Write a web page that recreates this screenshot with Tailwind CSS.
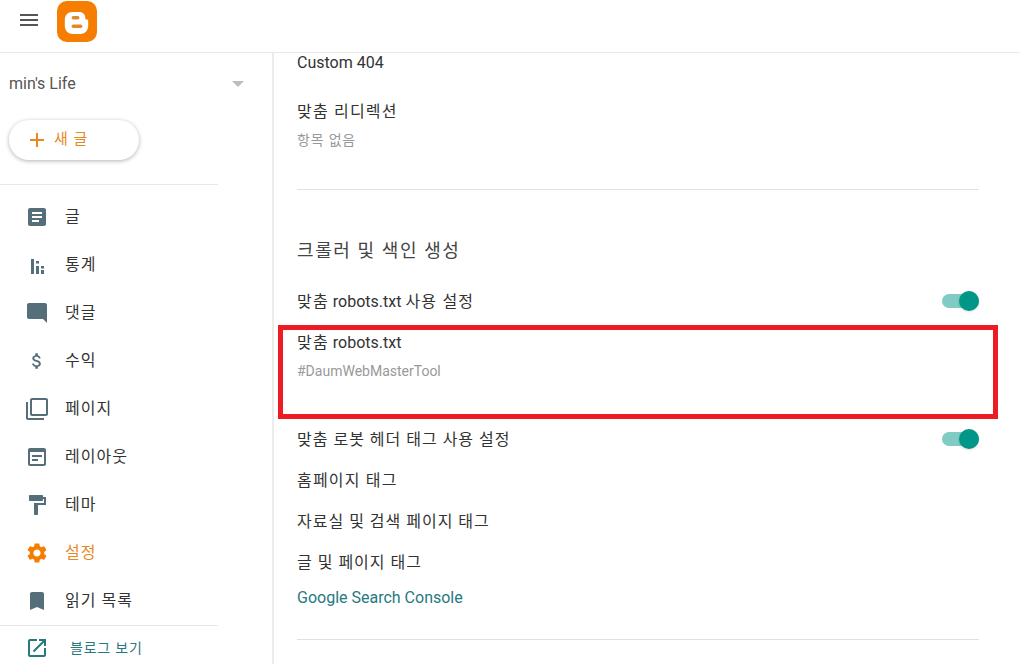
<!DOCTYPE html>
<html lang="ko">
<head>
  <meta charset="UTF-8">
  <title>설정</title>
  <script src="https://cdn.jsdelivr.net/npm/@tailwindcss/browser@4"></script>
</head>
<body class="relative h-[664px] overflow-hidden bg-white font-['Roboto','Noto_Sans_CJK_KR',sans-serif] text-[#212121]">

<!-- top bar -->
<header class="h-[53px] flex items-center border-b border-[#e8e8e8]">
  <svg class="ml-[17px] w-6 h-6 mb-[12px] fill-[#555]" viewBox="0 0 24 24"><path d="M3 18h18v-2H3v2zm0-5h18v-2H3v2zm0-7v2h18V6H3z"/></svg>
  <svg class="ml-[16px] mb-[10px] w-[40px] h-[41px]" viewBox="0 0 41 41" preserveAspectRatio="none">
    <rect x="0" y="0" width="41" height="41" rx="10" fill="#f57d00"/>
    <path d="M16 11h7c3.500 0 6 2.500 6 6 0 1 .5 1.500 1.500 1.500 1 0 1.500.5 1.500 1.500v5c0 4-3 8-8 8H16c-4 0-8-3-8-8V19c0-5 3-8 8-8z" fill="#fff"/>
    <rect x="15" y="15" width="8" height="3.500" rx="1.700" fill="#e08a2e"/>
    <rect x="15" y="23.500" width="11" height="3.500" rx="1.700" fill="#e08a2e"/>
  </svg>
</header>

<div class="flex h-[611px]">
  <!-- sidebar -->
  <aside class="w-[274px] shrink-0 border-r-2 border-[#ececec] flex flex-col">
    <div class="shrink-0 h-[60px] pt-[21px] pl-[9px] pr-[28px] flex items-start justify-between text-[16px] leading-[20px] text-[#555]">
      <span>min's Life</span>
      <span class="mt-[7px] w-0 h-0 border-x-[6px] border-x-transparent border-t-[6px] border-t-[#bdbdbd]"></span>
    </div>
    <div class="shrink-0 h-[71px] pt-[7px] pl-[9px]">
      <button class="w-[130px] h-[40px] rounded-full bg-white shadow-[0_1px_4px_rgba(0,0,0,0.3)] flex items-center pl-[20px] text-[#e8891f] text-[15px]">
        <svg class="w-4 h-4 fill-[#e8891f]" viewBox="0 0 16 16"><path d="M7 1h2v6h6v2H9v6H7V9H1V7h6z"/></svg>
        <span class="ml-[9px] mb-[2px] tracking-[1px]">새 글</span>
      </button>
    </div>
    <nav class="shrink-0 w-[218px] h-[442px] border-y border-[#e8e8e8] flex flex-col pt-[8px]">
      <a class="h-[48px] flex items-center pl-[25px] gap-[16px] text-[16px] tracking-[1px] text-[#333]">
        <svg class="w-6 h-6 fill-[#546e7a]" viewBox="0 0 24 24"><path d="M19 3H5c-1.100 0-2 .9-2 2v14c0 1.100.9 2 2 2h14c1.100 0 2-.9 2-2V5c0-1.100-.9-2-2-2zm-5 14H7v-2h7v2zm3-4H7v-2h10v2zm0-4H7V7h10v2z"/></svg>
        <span>글</span>
      </a>
      <a class="h-[48px] flex items-center pl-[25px] gap-[16px] text-[16px] tracking-[1px] text-[#333]">
        <svg class="w-6 h-6 fill-[#546e7a]" viewBox="0 0 24 24"><path d="M6 6h3v15H6zM11 13h3v8h-3zM11 8h3v2.500h-3zM16 17h3v4h-3zM16 13h3v2.500h-3z"/></svg>
        <span>통계</span>
      </a>
      <a class="h-[48px] flex items-center pl-[25px] gap-[16px] text-[16px] tracking-[1px] text-[#333]">
        <svg class="w-6 h-6 fill-[#546e7a]" viewBox="0 0 24 24"><path d="M22 4c0-1.100-.9-2-2-2H4c-1.100 0-2 .9-2 2v12c0 1.100.9 2 2 2h14l4 4V4z"/></svg>
        <span>댓글</span>
      </a>
      <a class="h-[48px] flex items-center pl-[25px] gap-[16px] text-[16px] tracking-[1px] text-[#333]">
        <svg class="w-6 h-6 fill-[#546e7a]" viewBox="-2 -2 28 28"><path d="M11.800 10.900c-2.270-.59-3-1.200-3-2.150 0-1.090 1.010-1.850 2.700-1.850 1.780 0 2.440.85 2.500 2.100h2.210c-.07-1.720-1.120-3.300-3.210-3.810V3h-3v2.160c-1.940.42-3.500 1.680-3.500 3.610 0 2.310 1.910 3.460 4.700 4.130 2.500.6 3 1.480 3 2.410 0 .69-.49 1.790-2.700 1.790-2.060 0-2.870-.92-2.980-2.100h-2.200c.12 2.190 1.760 3.420 3.680 3.830V21h3v-2.150c1.950-.37 3.500-1.500 3.500-3.550 0-2.840-2.430-3.810-4.700-4.400z"/></svg>
        <span>수익</span>
      </a>
      <a class="h-[48px] flex items-center pl-[25px] gap-[16px] text-[16px] tracking-[1px] text-[#333]">
        <svg class="w-6 h-6 fill-[#546e7a]" viewBox="0 0 24 24"><path d="M3 5H1v16c0 1.100.9 2 2 2h16v-2H3V5zm18-4H7c-1.100 0-2 .9-2 2v14c0 1.100.9 2 2 2h14c1.100 0 2-.9 2-2V3c0-1.100-.9-2-2-2zm0 16H7V3h14v14z"/></svg>
        <span>페이지</span>
      </a>
      <a class="h-[48px] flex items-center pl-[25px] gap-[16px] text-[16px] tracking-[1px] text-[#333]">
        <svg class="w-6 h-6 fill-[#546e7a]" viewBox="0 0 24 24"><path d="M19 3H5c-1.110 0-2 .9-2 2v14c0 1.100.89 2 2 2h14c1.100 0 2-.9 2-2V5c0-1.100-.9-2-2-2zm0 16H5V7h14v12zm-2-7H7v-2h10v2zm-4 4H7v-2h6v2z"/></svg>
        <span>레이아웃</span>
      </a>
      <a class="h-[48px] flex items-center pl-[25px] gap-[16px] text-[16px] tracking-[1px] text-[#333]">
        <svg class="w-6 h-6 fill-[#546e7a]" viewBox="0 0 24 24"><path d="M18 4V3c0-.55-.45-1-1-1H5c-.55 0-1 .45-1 1v4c0 .55.45 1 1 1h12c.55 0 1-.45 1-1V6h1v4H9v11c0 .55.45 1 1 1h2c.55 0 1-.45 1-1v-9h8V4h-3z"/></svg>
        <span>테마</span>
      </a>
      <a class="h-[48px] flex items-center pl-[25px] gap-[16px] text-[16px] tracking-[1px] text-[#e8891f]">
        <svg class="w-6 h-6 fill-[#f57d00]" viewBox="0 0 24 24"><path d="M19.140 12.940c.04-.3.060-.61.060-.94 0-.32-.02-.64-.07-.94l2.030-1.580c.18-.14.23-.41.120-.61l-1.920-3.320c-.12-.22-.37-.29-.59-.22l-2.390.96c-.5-.38-1.030-.7-1.620-.94l-.36-2.540c-.04-.24-.24-.41-.48-.41h-3.840c-.24 0-.43.17-.47.41l-.36 2.540c-.59.24-1.130.57-1.620.94l-2.390-.96c-.22-.08-.47 0-.59.22L2.740 8.870c-.12.21-.08.47.12.61l2.030 1.580c-.05.3-.09.63-.09.94s.02.64.07.94l-2.030 1.580c-.18.14-.23.41-.12.61l1.920 3.320c.12.22.37.29.59.22l2.390-.96c.5.38 1.030.7 1.620.94l.36 2.540c.05.24.24.41.48.41h3.840c.24 0 .44-.17.47-.41l.36-2.540c.59-.24 1.130-.56 1.620-.94l2.390.96c.22.08.47 0 .59-.22l1.920-3.320c.12-.22.070-.47-.12-.61l-2.010-1.580zM12 15.600c-1.980 0-3.600-1.620-3.600-3.600s1.620-3.600 3.600-3.600 3.600 1.620 3.600 3.600-1.620 3.600-3.600 3.600z"/></svg>
        <span>설정</span>
      </a>
      <a class="h-[48px] flex items-center pl-[25px] gap-[16px] text-[16px] tracking-[1px] text-[#333]">
        <svg class="w-6 h-6 fill-[#546e7a]" viewBox="0 0 24 24"><path d="M17 3H7c-1.100 0-2 .9-2 2v16l7-3 7 3V5c0-1.100-.9-2-2-2z"/></svg>
        <span>읽기 목록</span>
      </a>
    </nav>
    <a class="shrink-0 h-[44px] flex items-center pl-[25px] gap-[21px] text-[14px] tracking-[0.8px] text-[#26797f]">
      <svg class="w-6 h-6 fill-[#26797f]" viewBox="0 0 24 24"><path d="M19 19H5V5h7V3H5c-1.110 0-2 .9-2 2v14c0 1.100.89 2 2 2h14c1.100 0 2-.9 2-2v-7h-2v7zM14 3v2h3.590l-9.830 9.830 1.410 1.410L19 6.410V10h2V3h-7z"/></svg>
      <span>블로그 보기</span>
    </a>
  </aside>

  <!-- settings -->
  <main class="flex-1 pl-[23px] pr-[41px] text-[16px] text-[#333]">
    <div class="border-b border-[#e0e0e0] h-[137px]">
      <p class="leading-[20px]">Custom 404</p>
      <p class="leading-[20px] mt-[29px] tracking-[1.200px]">맞춤 리디렉션</p>
      <p class="leading-[18px] mt-[9px] text-[14px] tracking-[0.8px] text-[#999]">항목 없음</p>
    </div>
    <h2 class="mt-[49px] text-[18px] leading-[24px] tracking-[1.600px] text-[#444]">크롤러 및 색인 생성</h2>
    <div class="mt-[27px] h-[24px] flex items-center justify-between">
      <span><span class="tracking-[1.200px]">맞춤</span> robots.txt <span class="tracking-[1.200px]">사용 설정</span></span>
      <span class="relative mb-[2px] w-[37px] h-[14px] rounded-full bg-[#80cbc4]"><span class="absolute right-0 top-[-3px] w-[20px] h-[20px] rounded-full bg-[#009688] shadow-sm"></span></span>
    </div>
    <p class="mt-[17px] leading-[24px]"><span class="tracking-[1.200px]">맞춤</span> robots.txt</p>
    <p class="mt-[7px] leading-[18px] text-[14px] text-[#999]">#DaumWebMasterTool</p>
    <div class="mt-[48px] h-[24px] flex items-center justify-between">
      <span class="tracking-[1px]">맞춤 로봇 헤더 태그 사용 설정</span>
      <span class="relative mb-[2px] w-[37px] h-[14px] rounded-full bg-[#80cbc4]"><span class="absolute right-0 top-[-3px] w-[20px] h-[20px] rounded-full bg-[#009688] shadow-sm"></span></span>
    </div>
    <p class="mt-[17px] leading-[24px] tracking-[1.200px]">홈페이지 태그</p>
    <p class="mt-[17px] leading-[24px] tracking-[1px]">자료실 및 검색 페이지 태그</p>
    <p class="mt-[17px] leading-[24px] tracking-[1px]">글 및 페이지 태그</p>
    <p class="mt-[11px] leading-[24px] text-[#26797f]">Google Search Console</p>
    <div class="mt-[29px] border-b border-[#e0e0e0]"></div>
  </main>
</div>

<!-- red annotation box -->
<div class="absolute left-[278px] top-[325px] w-[720px] h-[94px] border-[5px] border-[#ed1c24]"></div>

</body>
</html>
